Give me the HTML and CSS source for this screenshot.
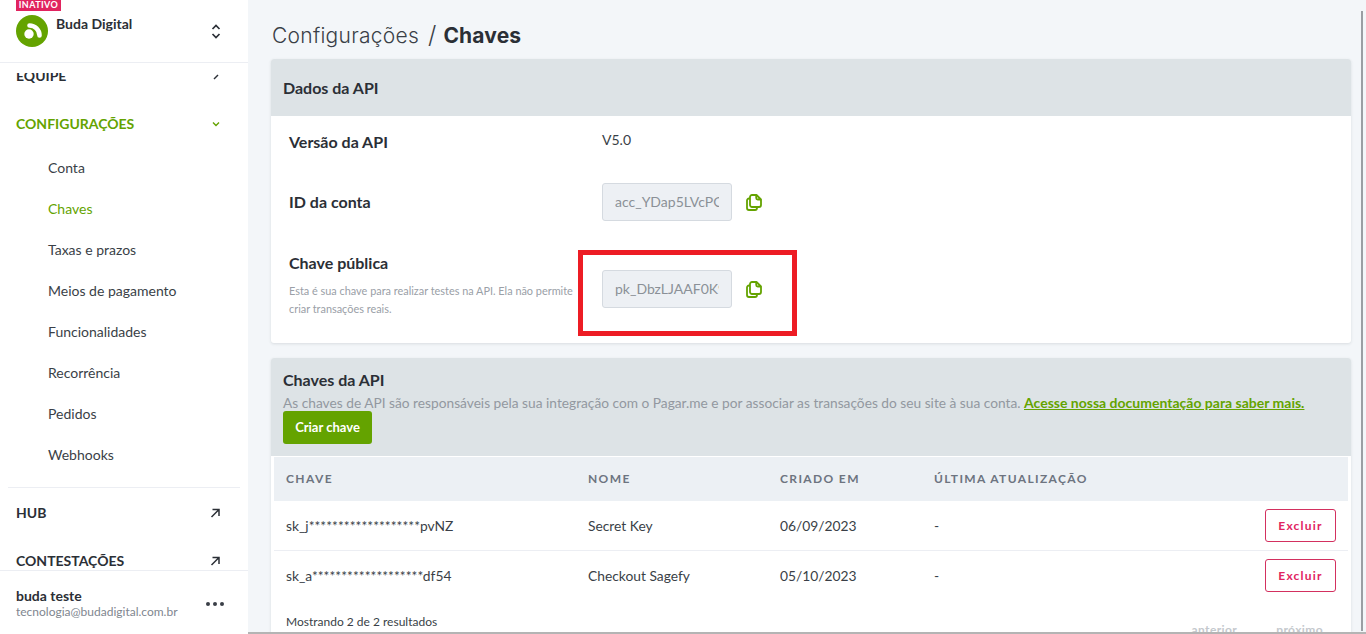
FILE: index.html
```html
<!DOCTYPE html>
<html lang="pt-BR">
<head>
<meta charset="utf-8">
<title>Chaves</title>
<link rel="stylesheet" href="styles.css">
</head>
<body>
<div class="app">
  <aside class="sidebar">
    <header class="account">
      <span class="badge">INATIVO</span>
      <svg class="logo" viewBox="0 0 32 32" aria-hidden="true">
        <circle cx="16" cy="16" r="16" fill="#64a300"/>
        <circle cx="13" cy="19" r="4.700" fill="#fff"/>
        <path d="M13.500 10.500C19 10.500 23.500 15 23.500 20.500" fill="none" stroke="#fff" stroke-width="4.600" stroke-linecap="round"/>
      </svg>
      <span class="account-name">Buda Digital</span>
      <svg class="updown" viewBox="0 0 10 16" aria-hidden="true"><path d="M1.500 5.500 5 2l3.500 3.500M1.500 10.500 5 14l3.500-3.500" fill="none" stroke="#2b2f36" stroke-width="1.700"/></svg>
    </header>
    <nav class="nav">
      <div class="nav-clipped"><div class="nav-clipped-inner"><span class="nav-head">EQUIPE</span><svg class="chev" viewBox="0 0 10 10"><path d="M3 8 7 4" fill="none" stroke="#2b2f36" stroke-width="1.400"/></svg></div></div>
      <div class="nav-head-row active"><span class="nav-head">CONFIGURAÇÕES</span><svg class="chev" viewBox="0 0 10 10"><path d="M2 3.500 5 6.500 8 3.500" fill="none" stroke="#64a300" stroke-width="1.400"/></svg></div>
      <ul class="subnav">
        <li>Conta</li>
        <li class="current">Chaves</li>
        <li>Taxas e prazos</li>
        <li>Meios de pagamento</li>
        <li>Funcionalidades</li>
        <li>Recorrência</li>
        <li>Pedidos</li>
        <li>Webhooks</li>
      </ul>
      <div class="nav-rule"></div>
      <div class="nav-head-row hub"><span class="nav-head">HUB</span><svg class="ext" viewBox="0 0 12 12"><path d="M2.500 10 10 2.500M3.500 2.500H10V9" fill="none" stroke="#2b2f36" stroke-width="1.500"/></svg></div>
      <div class="nav-head-row cont"><span class="nav-head">CONTESTAÇÕES</span><svg class="ext" viewBox="0 0 12 12"><path d="M2.500 10 10 2.500M3.500 2.500H10V9" fill="none" stroke="#2b2f36" stroke-width="1.500"/></svg></div>
    </nav>
    <footer class="user">
      <div class="user-text">
        <div class="user-name">buda teste</div>
        <div class="user-mail">tecnologia@budadigital.com.br</div>
      </div>
      <div class="dots"><i></i><i></i><i></i></div>
    </footer>
  </aside>
  <main class="main">
    <h1 class="title"><span class="crumb">Configurações</span><span class="sep">/</span><b>Chaves</b></h1>
    <section class="card">
      <div class="card-head"><h2>Dados da API</h2></div>
      <div class="card-body">
        <div class="row row-version">
          <div class="row-label"><h3>Versão da API</h3></div>
          <div class="version">V5.0</div>
        </div>
        <div class="row row-id">
          <div class="row-label"><h3>ID da conta</h3></div>
          <div class="field"><span>acc_YDap5LVcPC</span></div>
          <svg class="copy" viewBox="0 0 16 17"><path d="M4 3a2 2 0 0 1 2-2h4.500L15 5.500V11a2 2 0 0 1-2 2H6a2 2 0 0 1-2-2zM10.200 1v3a1.500 1.500 0 0 0 1.500 1.500H15M4 4.500H3a2 2 0 0 0-2 2V14a2 2 0 0 0 2 2h6a2 2 0 0 0 2-2v-1" fill="none" stroke="#64a300" stroke-width="1.800" stroke-linejoin="round"/></svg>
        </div>
        <div class="row row-pub">
          <div class="row-label">
            <h3>Chave pública</h3>
            <p>Esta é sua chave para realizar testes na API. Ela não permite criar transações reais.</p>
          </div>
          <div class="field"><span>pk_DbzLJAAF0K9</span></div>
          <svg class="copy" viewBox="0 0 16 17"><path d="M4 3a2 2 0 0 1 2-2h4.500L15 5.500V11a2 2 0 0 1-2 2H6a2 2 0 0 1-2-2zM10.200 1v3a1.500 1.500 0 0 0 1.500 1.500H15M4 4.500H3a2 2 0 0 0-2 2V14a2 2 0 0 0 2 2h6a2 2 0 0 0 2-2v-1" fill="none" stroke="#64a300" stroke-width="1.800" stroke-linejoin="round"/></svg>
        </div>
        <div class="highlight"></div>
      </div>
    </section>
    <section class="card keys">
      <div class="keys-head">
        <h2>Chaves da API</h2>
        <p>As chaves de API são responsáveis pela sua integração com o Pagar.me e por associar as transações do seu site à sua conta. <a>Acesse nossa documentação para saber mais.</a></p>
        <button class="primary" type="button">Criar chave</button>
      </div>
      <table class="table">
        <thead>
          <tr><th class="c1">CHAVE</th><th class="c2">NOME</th><th class="c3">CRIADO EM</th><th class="c4">ÚLTIMA ATUALIZAÇÃO</th><th></th></tr>
        </thead>
        <tbody>
          <tr><td>sk_j*******************pvNZ</td><td>Secret Key</td><td>06/09/2023</td><td>-</td><td class="act"><button class="danger" type="button">Excluir</button></td></tr>
          <tr><td>sk_a*******************df54</td><td>Checkout Sagefy</td><td>05/10/2023</td><td>-</td><td class="act"><button class="danger" type="button">Excluir</button></td></tr>
        </tbody>
      </table>
      <div class="pager">
        <span class="count">Mostrando 2 de 2 resultados</span>
        <span class="pages"><span>anterior</span><span>próximo</span></span>
      </div>
    </section>
  </main>
  <div class="scrollbar"><div class="thumb"></div></div>
</div>
<div class="bottom-bar"></div>
</body>
</html>
```
FILE: styles.css
```css
* { box-sizing: border-box; }
html, body { margin: 0; height: 100%; overflow: hidden; }
body { font-family: "Lato", sans-serif; color: #2b2f36; background: #f3f6f9; }
h1, h2, h3, p, ul { margin: 0; padding: 0; }
.app { display: flex; height: 634px; }
.bottom-bar { position: fixed; left: 0; right: 0; bottom: 0; height: 2px; background: #b4b4b4; }

.sidebar { width: 248px; flex: none; background: #fff; position: relative; height: 634px; overflow: hidden; }
.account { position: absolute; inset: 0 0 auto 0; height: 63px; background: #fff; border-bottom: 1px solid #eceef3; z-index: 2; }
.badge { position: absolute; left: 16px; top: 0; height: 11px; width: 45px; background: #e1245f; color: #fff; font-size: 9px; font-weight: 700; line-height: 10px; text-align: center; letter-spacing: .4px; }
.logo { position: absolute; left: 16px; top: 15px; width: 32px; height: 32px; }
.account-name { position: absolute; left: 56px; top: 15px; font-size: 14px; font-weight: 700; line-height: 18px; color: #2b2f36; }
.updown { position: absolute; left: 211px; top: 23px; width: 10px; height: 17px; }

.nav { position: absolute; inset: 0; }
.nav-clipped { position: absolute; left: 16px; right: 27px; top: 73px; height: 12px; overflow: hidden; }
.nav-clipped-inner { display: flex; justify-content: space-between; align-items: center; height: 18px; margin-top: -6px; }
.nav-head { font-size: 14px; font-weight: 700; line-height: 18px; }
.nav-head-row { position: absolute; left: 16px; right: 27px; height: 18px; display: flex; justify-content: space-between; align-items: center; }
.nav-head-row.active { top: 115px; color: #64a300; }
.nav-head-row.hub { top: 504px; }
.nav-head-row.cont { top: 552px; }
.chev { width: 10px; height: 10px; }
.ext { width: 12px; height: 12px; }
.subnav { position: absolute; top: 148px; left: 48px; list-style: none; font-size: 14px; }
.subnav li { height: 41px; line-height: 40px; color: #3a3f47; }
.subnav .current { color: #64a300; }
.nav-rule { position: absolute; left: 8px; top: 487px; width: 232px; border-top: 1px solid #eceef3; }

.user { position: absolute; left: 0; right: 0; bottom: 0; height: 64px; background: #fff; border-top: 1px solid #eceef3; padding: 17px 24px 0 16px; display: flex; justify-content: space-between; z-index: 2; }
.user-name { font-size: 14px; font-weight: 700; line-height: 16px; }
.user-mail { font-size: 12px; line-height: 15px; color: #80868f; }
.dots { display: flex; gap: 3px; margin-top: 14px; height: 4px; }
.dots i { width: 4px; height: 4px; border-radius: 50%; background: #3a3f47; }

.main { width: 1112px; flex: none; padding: 0 9px 0 23px; height: 634px; overflow: hidden; }
.title { height: 59px; padding: 21px 0 0 1px; font-family: "Inter", sans-serif; font-size: 21px; line-height: 30px; font-weight: 300; color: #3a3f47; display: flex; }
.title .crumb { letter-spacing: .27px; }
.title .sep { margin: -1px 7px 0 9px; font-size: 24px; }
.title b { font-weight: 700; color: #2b2f36; letter-spacing: .15px; }

.card { background: #fff; border-radius: 3px; box-shadow: 0 1px 3px rgba(60, 70, 80, .14); }
.card-head { height: 57px; background: #dde3e6; border-radius: 3px 3px 0 0; padding: 0 12px; display: flex; align-items: center; }
.card-head h2 { font-size: 16px; font-weight: 700; line-height: 20px; color: #2b2f36; }
.card-body { height: 227px; position: relative; padding: 0 18px; }
.row { display: flex; align-items: flex-start; }
.row-label { width: 313px; flex: none; }
.row h3 { font-size: 16px; font-weight: 700; line-height: 20px; }
.row-version { height: 67px; padding-top: 16px; }
.row-version .version { font-size: 14px; line-height: 18px; color: #3a3f47; margin-top: -1px; }
.row-id { height: 87px; }
.row-id .row-label { padding-top: 9px; }
.row-pub { height: 73px; }
.row-pub .row-label { margin-top: -17px; }
.row p { font-size: 10.900px; line-height: 18px; color: #9aa0a7; margin-top: 9px; width: 290px; }
.field { width: 130px; height: 38px; background: #edf0f4; border: 1px solid #d5dae0; border-radius: 3px; padding: 0 12px; font-size: 14px; line-height: 36px; color: #8b9097; overflow: hidden; white-space: nowrap; }
.field span { display: block; overflow: hidden; }
.copy { width: 16px; height: 17px; margin: 11px 0 0 14px; flex: none; }
.highlight { position: absolute; left: 307px; top: 134px; width: 219px; height: 86px; border: 5px solid #ed1c24; }

.keys { margin-top: 15px; }
.keys-head { background: #dde3e6; height: 98px; padding: 13px 12px 0; border-radius: 3px 3px 0 0; }
.keys-head h2 { font-size: 16px; font-weight: 700; line-height: 18px; }
.keys-head p { font-size: 13.720px; line-height: 15px; color: #9298a0; margin-top: 6px; white-space: nowrap; }
.keys-head a { color: #64a300; font-size: 14px; font-weight: 700; text-decoration: underline; }
.primary { display: block; margin-top: 1px; width: 89px; height: 33px; background: #64a300; color: #fff; border: 0; border-radius: 3px; font: 700 13px/33px "Lato", sans-serif; padding: 0; }
.table { width: calc(100% - 6px); margin: 0 3px; border-collapse: collapse; font-size: 13.800px; table-layout: fixed; }
.table th { height: 44px; background: #ecf0f4; text-align: left; font-size: 12px; font-weight: 700; letter-spacing: 1.370px; color: #6d7480; padding: 0 0 0 12px; border-top: 1px solid #fff; }
.table td { height: 50px; padding: 0 0 0 12px; border-top: 1px solid #eceef3; color: #3a3f47; }
.table tbody tr:first-child td { border-top: 0; }
.c1 { width: 302px; }
.c2 { width: 192px; }
.c3 { width: 154px; }
.c4 { width: 270px; }
.table .act { text-align: right; padding-right: 12px; }
.danger { width: 71px; height: 33px; background: #fff; border: 1px solid #d3305f; border-radius: 3px; color: #e1245f; font: 700 12px/31px "Lato", sans-serif; letter-spacing: 1.200px; padding: 0; }
.pager { display: flex; justify-content: space-between; padding: 13px 28px 0 15px; height: 40px; }
.count { font-size: 12px; line-height: 16px; color: #3a3f47; }
.pages { display: flex; gap: 39px; font-size: 12px; font-weight: 700; color: #c4c8cd; padding-top: 8px; letter-spacing: .4px; }

.scrollbar { width: 6px; flex: none; position: relative; }
.thumb { position: absolute; left: 1px; top: 11px; width: 2px; height: 620px; background: #9a9ea3; }
```
